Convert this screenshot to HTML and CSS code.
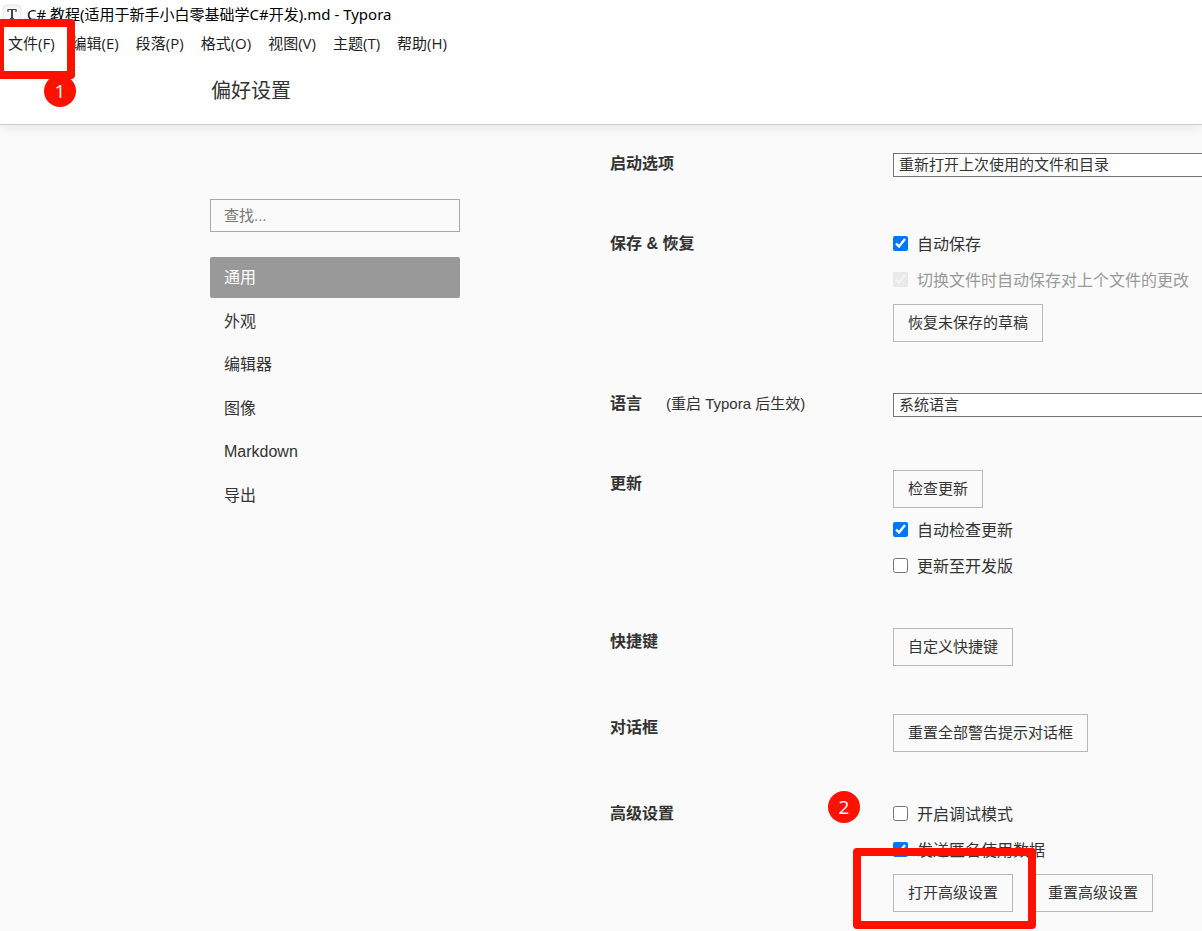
FILE: index.html
```html
<!DOCTYPE html>
<html lang="zh-CN">
<head>
<meta charset="utf-8">
<title>C# 教程(适用于新手小白零基础学C#开发).md - Typora</title>
<link rel="stylesheet" href="styles.css">
</head>
<body>
<header class="top">
  <div class="titlebar">
    <svg class="app-icon" viewBox="0 0 20 20" aria-hidden="true">
      <rect x="1" y="1" width="18" height="18" rx="4" fill="#f7f7f7" stroke="#e4e4e4"/>
      <path d="M6 8V5.5h8V8M8 14.5h4" fill="none" stroke="#444" stroke-width="1.1"/>
      <path d="M10 5.5v9" stroke="#444" stroke-width="2"/>
    </svg>
    <span class="window-title">C# 教程(适用于新手小白零基础学C#开发).md - Typora</span>
  </div>
  <nav class="menubar">
    <button type="button" class="menu">文件(F)</button>
    <button type="button" class="menu">编辑(E)</button>
    <button type="button" class="menu">段落(P)</button>
    <button type="button" class="menu">格式(O)</button>
    <button type="button" class="menu">视图(V)</button>
    <button type="button" class="menu">主题(T)</button>
    <button type="button" class="menu">帮助(H)</button>
  </nav>
  <h1 class="page-title">偏好设置</h1>
  <div class="frame frame-file"></div>
  <span class="badge badge-file">1</span>
</header>
<main class="main">
  <aside class="sidebar">
    <input class="search" type="search" placeholder="查找..." aria-label="查找">
    <nav class="sections">
      <a class="section active" href="#general">通用</a>
      <a class="section" href="#look">外观</a>
      <a class="section" href="#editor">编辑器</a>
      <a class="section" href="#image">图像</a>
      <a class="section" href="#markdown">Markdown</a>
      <a class="section" href="#export">导出</a>
    </nav>
  </aside>
  <div class="settings" id="general">
    <section class="row">
      <h2 class="label"><label for="launch">启动选项</label></h2>
      <div class="controls">
        <select class="select" id="launch"><option>重新打开上次使用的文件和目录</option></select>
      </div>
    </section>
    <section class="row">
      <h2 class="label">保存 &amp; 恢复</h2>
      <div class="controls">
        <label class="check"><input type="checkbox" checked>自动保存</label>
        <label class="check disabled"><input type="checkbox" checked disabled>切换文件时自动保存对上个文件的更改</label>
        <div class="actions"><button type="button" class="btn">恢复未保存的草稿</button></div>
      </div>
    </section>
    <section class="row">
      <h2 class="label"><label for="lang">语言</label><small class="hint">(重启 Typora 后生效)</small></h2>
      <div class="controls">
        <select class="select" id="lang"><option>系统语言</option></select>
      </div>
    </section>
    <section class="row">
      <h2 class="label">更新</h2>
      <div class="controls">
        <div class="actions"><button type="button" class="btn">检查更新</button></div>
        <label class="check"><input type="checkbox" checked>自动检查更新</label>
        <label class="check"><input type="checkbox">更新至开发版</label>
      </div>
    </section>
    <section class="row">
      <h2 class="label">快捷键</h2>
      <div class="controls">
        <div class="actions"><button type="button" class="btn">自定义快捷键</button></div>
      </div>
    </section>
    <section class="row">
      <h2 class="label">对话框</h2>
      <div class="controls">
        <div class="actions"><button type="button" class="btn">重置全部警告提示对话框</button></div>
      </div>
    </section>
    <section class="row">
      <h2 class="label">高级设置</h2>
      <div class="controls">
        <label class="check"><input type="checkbox">开启调试模式</label>
        <label class="check"><input type="checkbox" checked>发送匿名使用数据</label>
        <div class="actions">
          <button type="button" class="btn">打开高级设置</button>
          <button type="button" class="btn">重置高级设置</button>
        </div>
        <div class="frame frame-advanced"></div>
        <span class="badge badge-advanced">2</span>
      </div>
    </section>
  </div>
</main>
</body>
</html>
```
FILE: styles.css
```css
* {
  box-sizing: border-box;
}

body {
  margin: 0;
  overflow: hidden;
  background: #fafafa;
  color: #333;
  font-family: "Liberation Sans", "Noto Sans CJK SC", sans-serif;
  font-size: 16px;
}

button,
input,
select {
  font-family: inherit;
  color: inherit;
}

.top {
  position: relative;
  background: #fff;
  border-bottom: 1px solid #ccc;
  box-shadow: 0 1px 12px rgba(0, 0, 0, 0.1);
  font-family: "Open Sans", "Noto Sans CJK SC", sans-serif;
}

.titlebar {
  display: flex;
  align-items: center;
  gap: 5px;
  height: 27px;
  padding-left: 2px;
  color: #000;
  font-family: "Noto Sans", "Noto Sans CJK SC", sans-serif;
  font-size: 15px;
  white-space: nowrap;
}

.app-icon {
  width: 20px;
  height: 20px;
}

.menubar {
  display: flex;
  gap: 17px;
  height: 30px;
  padding-left: 8px;
}

.menu {
  padding: 0;
  border: 0;
  background: none;
  color: #222;
  font-size: 15px;
  white-space: nowrap;
}

.page-title {
  margin: 0;
  padding: 18px 0 17px 211px;
  font-size: 20px;
  font-weight: 400;
  line-height: 32px;
}

.main {
  display: grid;
  grid-template-columns: 250px 1fr;
  gap: 150px;
  padding: 22px 0 20px 210px;
}

.sidebar {
  padding-top: 52px;
}

.search {
  display: block;
  width: 100%;
  height: 33px;
  margin-bottom: 25px;
  padding: 0 13px;
  border: 1px solid #aaa;
  border-radius: 0;
  background: transparent;
  font-size: 15px;
  appearance: none;
}

.search::placeholder {
  color: #777;
}

.sections {
  display: flex;
  flex-direction: column;
  justify-content: space-between;
  min-height: 259px;
}

.section {
  padding: 1px 14px 0;
  border-radius: 2px;
  color: #333;
  line-height: 40px;
  text-decoration: none;
}

.section.active {
  background: #999;
  color: #fff;
}

.settings {
  display: flex;
  flex-direction: column;
  gap: 45px;
}

.row {
  display: grid;
  grid-template-columns: 283px minmax(340px, 1fr);
  min-height: 35px;
}

.label {
  margin: 0;
  font-size: 16px;
  font-weight: 700;
  line-height: 34px;
}

.hint {
  margin-left: 24px;
  font-size: 15px;
  font-weight: 400;
}

.controls {
  position: relative;
  display: flex;
  flex-direction: column;
  gap: 5px;
}

.select {
  height: 24px;
  margin-top: 6px;
  padding: 0 5px 1px;
  border: 1px solid #767676;
  border-radius: 0;
  background: #fff;
  font-size: 15px;
  line-height: 20px;
  appearance: none;
}

.check {
  display: flex;
  align-items: center;
  gap: 9px;
  padding-top: 5px;
  line-height: 26px;
  white-space: nowrap;
}

.check input {
  width: 15px;
  height: 15px;
  margin: 0 0 3px;
}

.check.disabled {
  color: #999;
}

.check.disabled input {
  opacity: 0.4;
}

.actions {
  display: flex;
  gap: 20px;
  padding-top: 3px;
}

.check + .actions {
  margin-top: 2px;
}

.btn {
  height: 38px;
  padding: 0 14px 4px;
  border: 1px solid #b8b8b8;
  background: transparent;
  font-size: 15px;
  white-space: nowrap;
}

/* Numbered step callouts */
.frame {
  position: absolute;
  border: 8px solid #ff1100;
  border-radius: 4px;
  pointer-events: none;
}

.frame-file {
  top: 19px;
  left: -4px;
  width: 79px;
  height: 60px;
}

.frame-advanced {
  left: -40px;
  bottom: -17px;
  width: 183px;
  height: 81px;
}

.badge {
  position: absolute;
  width: 32px;
  height: 32px;
  border-radius: 50%;
  background: #ff1100;
  color: #fff;
  font-family: "Open Sans", sans-serif;
  font-size: 19px;
  line-height: 32px;
  text-align: center;
}

.badge-file {
  top: 75px;
  left: 44px;
}

.badge-advanced {
  top: -6px;
  left: -65px;
}
```
